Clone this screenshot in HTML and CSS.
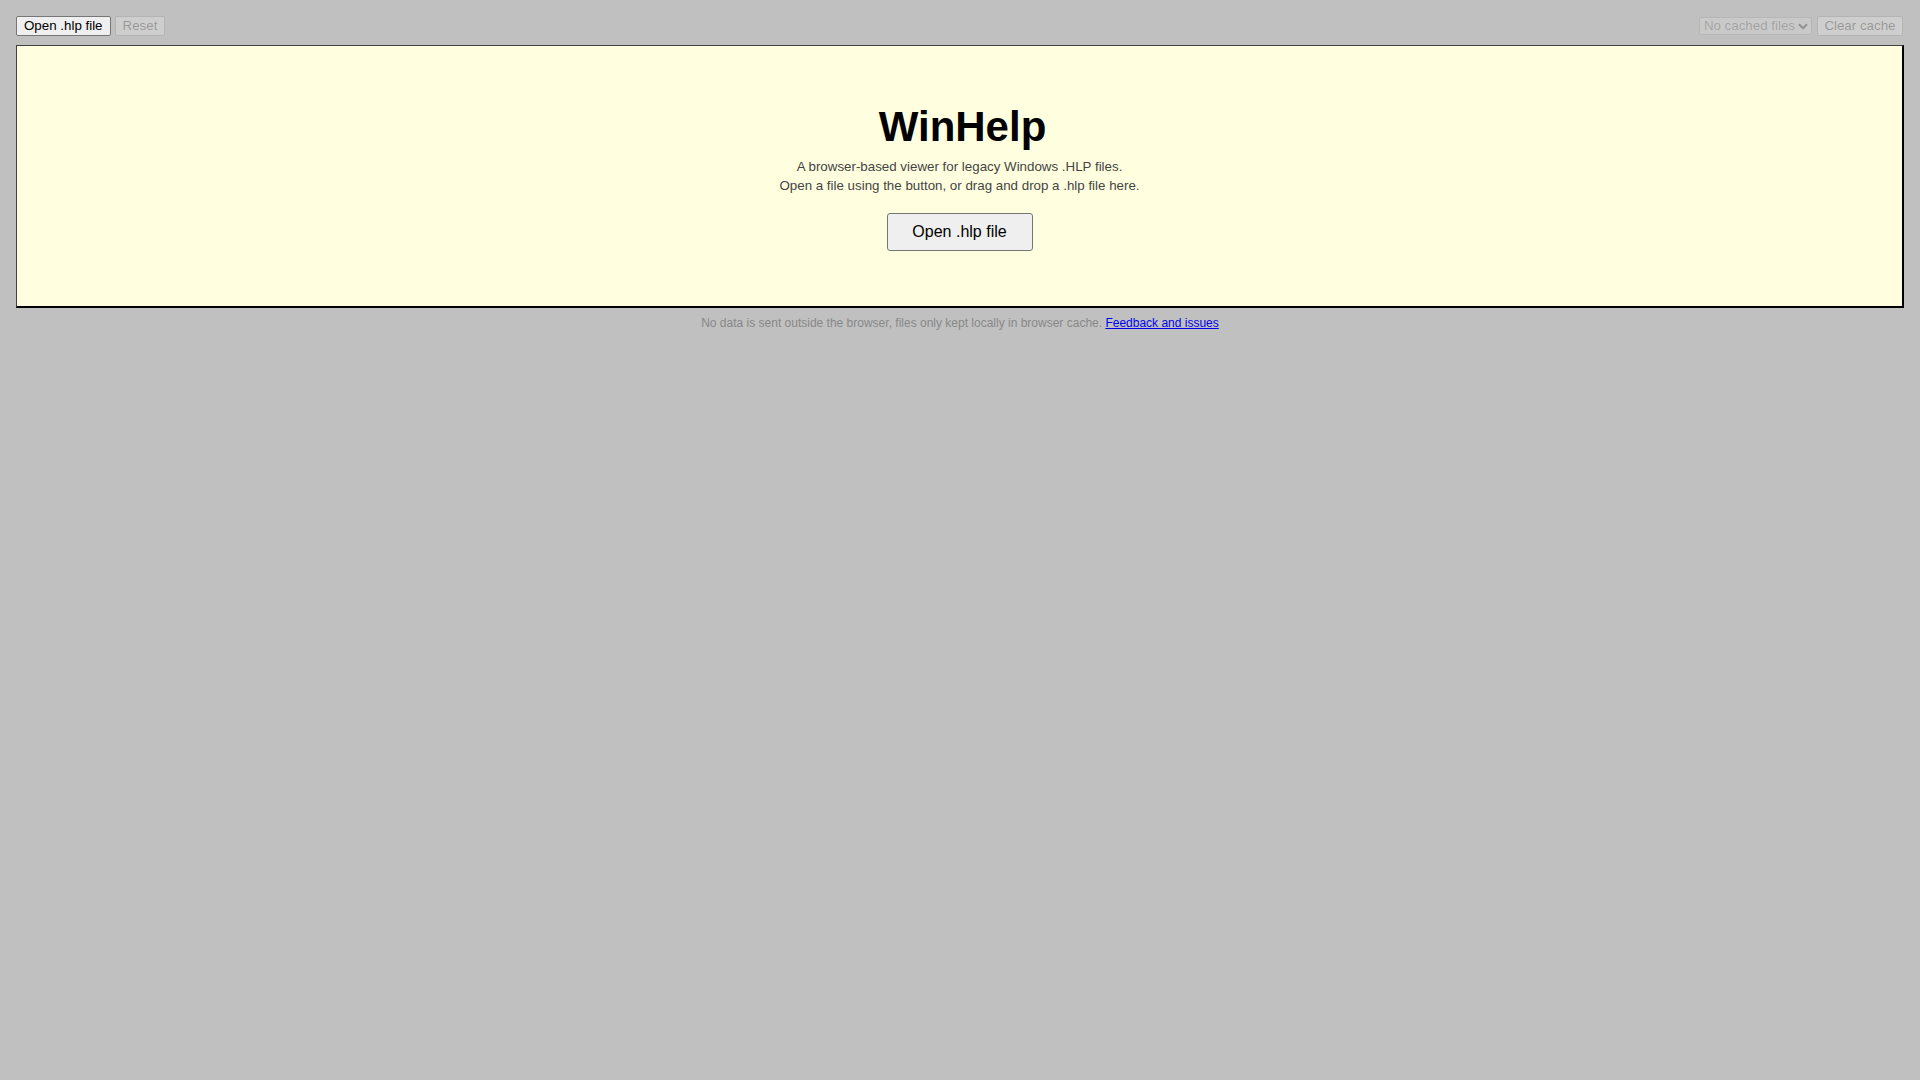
FILE: index.html
```html
<!DOCTYPE html>
<html lang="en">
<head>
<meta charset="utf-8">
<title>WinHelp</title>
<link rel="stylesheet" href="styles.css">
</head>
<body>
<div class="toolbar">
  <div class="group">
    <button class="btn">Open .hlp file</button>
    <button class="btn" disabled>Reset</button>
  </div>
  <div class="group right">
    <div class="sel-wrap">
      <select class="sel" disabled><option>No cached files</option></select>
      <svg class="chev" width="10" height="7" viewBox="0 0 10 7" aria-hidden="true"><path d="M1 1.2 L5 5.2 L9 1.2" fill="none" stroke="currentColor" stroke-width="2"/></svg>
    </div>
    <button class="btn btn-r" disabled>Clear cache</button>
  </div>
</div>
<main class="panel">
  <h1 class="title">WinHelp</h1>
  <p class="sub">A browser-based viewer for legacy Windows .HLP files.</p>
  <p class="sub">Open a file using the button, or drag and drop a .hlp file here.</p>
  <button class="big-btn">Open .hlp file</button>
</main>
<footer class="footer">No data is sent outside the browser, files only kept locally in browser cache. <a href="#">Feedback and issues</a></footer>
</body>
</html>
```
FILE: styles.css
```css
html, body {
  margin: 0;
  padding: 0;
  background: #c0c0c0;
  font-family: "Liberation Sans", Arial, sans-serif;
}
body {
  padding: 16px 16px 0 16px;
}
.toolbar {
  display: flex;
  justify-content: space-between;
  align-items: center;
  height: 20px;
  margin-bottom: 9px;
}
.group {
  display: flex;
  gap: 4px;
  align-items: center;
}
.group.right {
  gap: 5px;
  margin-right: 1px;
}
.btn {
  font-family: "Liberation Sans", Arial, sans-serif;
  font-size: 13.333px;
  height: 20px;
  padding: 0 7px;
  margin: 0;
  background: #efefef;
  color: #000;
  border: 1px solid #767676;
  border-radius: 2px;
  line-height: 18px;
}
.btn-r {
  padding: 0 6.5px;
}
.btn:disabled {
  color: rgba(16,16,16,0.3);
  background: rgba(239,239,239,0.3);
  border-color: rgba(118,118,118,0.3);
}
.sel-wrap {
  position: relative;
  display: flex;
  align-items: center;
}
.sel {
  -webkit-appearance: none;
  appearance: none;
  font-family: "Liberation Sans", Arial, sans-serif;
  font-size: 13.333px;
  width: 113px;
  height: 18px;
  margin: 0;
  padding: 0 0 0 4px;
  line-height: 16px;
  color: rgba(16,16,16,0.3);
  background: rgba(239,239,239,0.3);
  border: 1px solid rgba(118,118,118,0.3);
  border-radius: 2px;
}
.chev {
  position: absolute;
  left: 99px;
  top: 6px;
  color: rgba(16,16,16,0.3);
  pointer-events: none;
}
.panel {
  background: #ffffe0;
  border-style: solid;
  border-width: 1px 2px 2px 1px;
  border-color: #404040 #000 #000 #404040;
  box-sizing: border-box;
  height: 263px;
  text-align: center;
  padding-top: 57px;
}
.title {
  margin: 0 0 6px 0;
  font-size: 42px;
  line-height: 48px;
  font-weight: bold;
  color: #000;
  padding-left: 6px;
}
.sub {
  margin: 0;
  font-size: 13.333px;
  line-height: 19px;
  color: #444;
}
.big-btn {
  margin-top: 18px;
  font-family: "Liberation Sans", Arial, sans-serif;
  font-size: 16px;
  width: 146px;
  height: 38px;
  padding: 0;
  background: #efefef;
  color: #000;
  border: 1px solid #767676;
  border-radius: 3px;
}
.footer {
  text-align: center;
  font-size: 12px;
  line-height: 14px;
  color: #888;
  padding-top: 8px;
}
.footer a {
  color: #0000ee;
  text-decoration: underline;
}
```
